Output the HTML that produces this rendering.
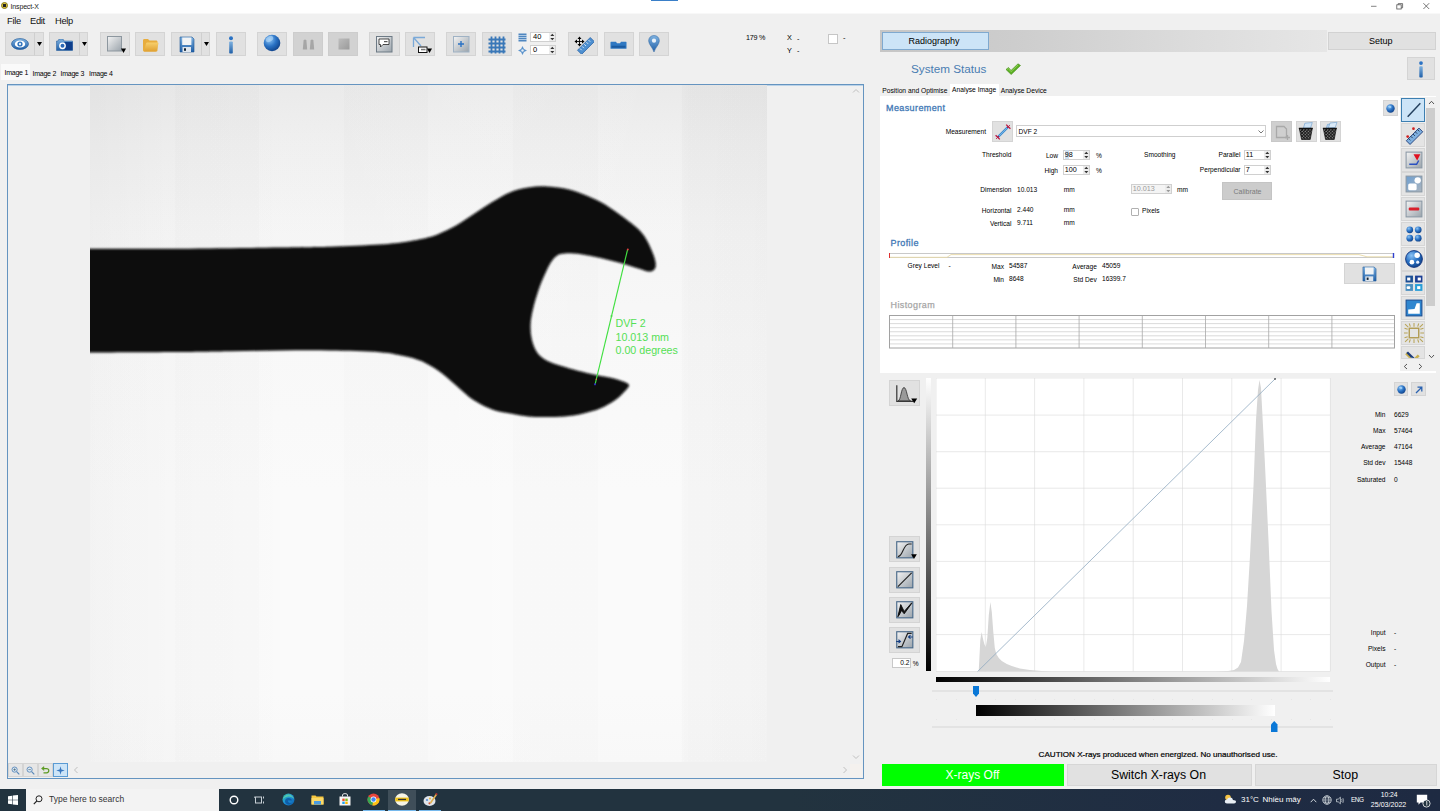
<!DOCTYPE html>
<html><head><meta charset="utf-8"><title>Inspect-X</title>
<style>
*{box-sizing:border-box;margin:0;padding:0}
html,body{width:1440px;height:811px;overflow:hidden;background:#f0f0f0;font-family:"Liberation Sans",sans-serif;font-size:7.5px;color:#000}
.a{position:absolute}
.t{position:absolute;white-space:nowrap;line-height:1}
.btn{position:absolute;background:#e1e1e1;border:1px solid #d4d4d4}
.r{text-align:right}
#right .t{margin-top:.8px}
.spin{position:absolute;background:#fff;border:1px solid #d0d0d0}
</style></head><body>
<!-- TITLEBAR -->
<div class="a" id="titlebar" style="left:0;top:0;width:1440px;height:12.5px;background:#fff"></div>
<div class="a" style="left:651px;top:0;width:27px;height:1px;background:#3a7fc8"></div>
<div class="a" style="left:1px;top:2px;width:7px;height:7px;border-radius:50%;background:#d9c23a;border:1px solid #8a7a20"></div>
<div class="a" style="left:3px;top:4px;width:3px;height:3px;background:#222"></div>
<div class="t" style="left:10.5px;top:3px;font-size:7px;letter-spacing:-.15px;color:#222">Inspect-X</div>
<svg class="a" style="left:1368px;top:0" width="66" height="13" viewBox="1368 0 66 13"><path d="M1371 6.3H1376.5" stroke="#666" stroke-width=".8"/><rect x="1396.8" y="4.8" width="4.4" height="4.2" fill="none" stroke="#555" stroke-width=".8"/><path d="M1398.2 4.8V3.6H1402.6V7.8H1401.2" fill="none" stroke="#555" stroke-width=".8"/><path d="M1423.4 3.2L1429.2 9M1429.2 3.2L1423.4 9" stroke="#555" stroke-width=".8"/></svg>
<div class="a" style="left:0;top:12.5px;width:1440px;height:1px;background:#f8f8f8"></div>
<!-- MENU -->
<div class="t" style="left:7px;top:16.8px;font-size:9.3px;letter-spacing:-.3px;color:#111">File</div>
<div class="t" style="left:30px;top:16.8px;font-size:9.3px;letter-spacing:-.3px;color:#111">Edit</div>
<div class="t" style="left:55px;top:16.8px;font-size:9.3px;letter-spacing:-.3px;color:#111">Help</div>
<!-- TOOLBAR -->
<div id="toolbar"><svg width="0" height="0" class="a"><defs>
<linearGradient id="gb" x1="0" y1="0" x2="0" y2="1"><stop offset="0" stop-color="#7fb2e0"/><stop offset="1" stop-color="#1f5fa8"/></linearGradient>
<linearGradient id="gg" x1="0" y1="0" x2="1" y2="1"><stop offset="0" stop-color="#f4f4f4"/><stop offset="1" stop-color="#9aa3ab"/></linearGradient>
<radialGradient id="gs" cx=".35" cy=".3" r=".8"><stop offset="0" stop-color="#8cc4f5"/><stop offset=".5" stop-color="#2a72c4"/><stop offset="1" stop-color="#0b3a80"/></radialGradient>
<linearGradient id="gf" x1="0" y1="0" x2="0" y2="1"><stop offset="0" stop-color="#f7cf6c"/><stop offset="1" stop-color="#e0a030"/></linearGradient>
<linearGradient id="gbg" x1="0" y1="0" x2="1" y2="1"><stop offset="0" stop-color="#6f9fd0"/><stop offset="1" stop-color="#aab4be"/></linearGradient></defs></svg>
<div class="btn" style="left:5px;top:32px;width:30px;height:24px;"><svg class="a" style="left:5px;top:5px" width="18" height="12" viewBox="0 0 18 12"><ellipse cx="9" cy="6" rx="8.5" ry="5.5" fill="url(#gb)" stroke="#1d5596" stroke-width=".6"/><ellipse cx="9" cy="6" rx="5.2" ry="3.6" fill="#fff"/><circle cx="9" cy="6" r="2.6" fill="#2f73bd"/><circle cx="9" cy="6" r="1.2" fill="#dbeaf8"/></svg></div>
<div class="btn" style="left:34px;top:32px;width:9.5px;height:24px;border-left-color:#cfcfcf"><svg class="a" style="left:2px;top:9px" width="6" height="5"><path d="M0 0H5L2.5 4Z" fill="#000"/></svg></div>
<div class="btn" style="left:49px;top:32px;width:30.5px;height:24px;"><svg class="a" style="left:6px;top:6px" width="17" height="12" viewBox="0 0 17 12"><path d="M3 0H7L8 2H16.5V11.5H0.5V2H2Z" fill="url(#gb)" stroke="#1d5596" stroke-width=".5"/><rect x="8.5" y="3" width="8" height="8" fill="#0f3f8c"/><circle cx="6.5" cy="6.8" r="3.4" fill="#fff"/><circle cx="6.5" cy="6.8" r="2" fill="#2a68b5"/></svg></div>
<div class="btn" style="left:78.5px;top:32px;width:9.5px;height:24px;border-left-color:#cfcfcf"><svg class="a" style="left:2px;top:9px" width="6" height="5"><path d="M0 0H5L2.5 4Z" fill="#000"/></svg></div>
<div class="btn" style="left:100px;top:32px;width:30px;height:24px;"><svg class="a" style="left:6px;top:3px" width="20" height="18" viewBox="0 0 20 18"><rect x="0.5" y="0.5" width="14" height="14.5" fill="url(#gg)" stroke="#8d979f" stroke-width="1"/><path d="M14 12.5H19L16.5 17Z" fill="#000"/></svg></div>
<div class="btn" style="left:135px;top:32px;width:30px;height:24px;"><svg class="a" style="left:6px;top:5px" width="17" height="14" viewBox="0 0 17 14"><path d="M1 2.5C1 1.5 1.5 1 2.5 1H6L7.5 2.5H14C15 2.5 15.5 3 15.5 4V12C15.5 13 15 13.5 14 13.5H2.5C1.5 13.5 1 13 1 12Z" fill="#e8ad3e"/><path d="M2 13.5L4 5.5C4.2 4.8 4.6 4.5 5.3 4.5H15.5C16.3 4.5 16.6 5 16.4 5.8L14.8 12.5C14.6 13.2 14.2 13.5 13.5 13.5Z" fill="url(#gf)"/></svg></div>
<div class="btn" style="left:171px;top:32px;width:30.5px;height:24px;"><svg class="a" style="left:7px;top:3px" width="16" height="17" viewBox="0 0 16 17"><path d="M1 1H13L15 3V16H1Z" fill="url(#gb)" stroke="#1d5596" stroke-width=".6"/><rect x="3.2" y="1.5" width="9.2" height="7.5" fill="#f1f3f5"/><rect x="3.5" y="11" width="8.5" height="5" fill="#dfe6ee"/><rect x="5" y="12.3" width="2" height="2.5" fill="#123"/></svg></div>
<div class="btn" style="left:200.5px;top:32px;width:9.5px;height:24px;border-left-color:#cfcfcf"><svg class="a" style="left:2px;top:9px" width="6" height="5"><path d="M0 0H5L2.5 4Z" fill="#000"/></svg></div>
<div class="btn" style="left:216px;top:32px;width:30px;height:24px;"><svg class="a" style="left:10.5px;top:3px" width="6" height="18" viewBox="0 0 6 18"><circle cx="3" cy="2.2" r="2" fill="#2a72c4"/><rect x="1.2" y="5.5" width="3.6" height="12" rx=".8" fill="url(#gb)"/></svg></div>
<div class="btn" style="left:257px;top:32px;width:30px;height:24px;"><svg class="a" style="left:4.5px;top:1.2px" width="18" height="18" viewBox="0 0 18 18"><circle cx="9" cy="9" r="8.3" fill="url(#gs)"/><ellipse cx="6.5" cy="5" rx="4" ry="2.6" fill="#bfe0fb" opacity=".55" transform="rotate(-30 6.5 5)"/></svg></div>
<div class="btn" style="left:293px;top:32px;width:30px;height:24px;background:#d2d2d2;border-color:#cdcdcd"><svg class="a" style="left:8px;top:5px" width="13" height="12" viewBox="0 0 13 12"><path d="M.8 11.5L1.6 2.5Q3 .3 4.4 2.5L5.2 11.5Z" fill="#a6a6a6"/><path d="M7.8 11.5L8.6 2.5Q10 .3 11.4 2.5L12.2 11.5Z" fill="#a6a6a6"/></svg></div>
<div class="btn" style="left:328px;top:32px;width:30px;height:24px;background:#d2d2d2;border-color:#cdcdcd"><svg class="a" style="left:8.5px;top:4.5px" width="12" height="12" viewBox="0 0 12 12"><defs><linearGradient id="gst" x1="0" y1="0" x2="1" y2="1"><stop offset="0" stop-color="#bdbdbd"/><stop offset="1" stop-color="#9a9a9a"/></linearGradient></defs><rect x=".5" y=".5" width="11" height="11" fill="url(#gst)"/></svg></div>
<div class="btn" style="left:369px;top:32px;width:31px;height:24px;"><svg class="a" style="left:5.5px;top:2.5px" width="17" height="17" viewBox="0 0 17 17"><rect x=".5" y=".5" width="15.5" height="15.5" fill="url(#gg)" stroke="#6d7a85" stroke-width="1"/><path d="M3 3H13V8.5H7L4.5 11V8.5H3Z" fill="#fff" stroke="#222" stroke-width=".8"/><rect x="8" y="5" width="3.5" height="1.2" fill="#555"/></svg></div>
<div class="btn" style="left:405px;top:32px;width:30px;height:24px;"><svg class="a" style="left:6px;top:3px" width="20" height="19" viewBox="0 0 20 19"><path d="M1.5 1.5H13M1.5 1.5V11M1.5 1.5L9 10" stroke="#7aa9d8" stroke-width="1.3" fill="none"/><rect x="6.5" y="11" width="8.5" height="5.5" fill="#fff" stroke="#111" stroke-width="1"/><rect x="9" y="12.8" width="4.5" height="1.5" fill="#777"/><path d="M15 12.5H20L17.5 17Z" fill="#000"/></svg></div>
<div class="btn" style="left:446px;top:32px;width:30px;height:24px;"><svg class="a" style="left:5.5px;top:2.5px" width="17" height="17" viewBox="0 0 17 17"><rect x=".5" y=".5" width="15.5" height="15.5" fill="url(#gg)" stroke="#9fb2c4" stroke-width="1"/><path d="M8 5V11M5 8H11" stroke="#2a72c4" stroke-width="1.4"/></svg></div>
<div class="btn" style="left:482px;top:32px;width:30px;height:24px;"><svg class="a" style="left:4.5px;top:2.5px" width="18" height="18" viewBox="0 0 18 18"><path d="M3.5 0.5V17.5M7.5 0.5V17.5M11.5 0.5V17.5M15.5 0.5V17.5M0.5 3.5H17.5M0.5 7.5H17.5M0.5 11.5H17.5M0.5 15.5H17.5" stroke="#3a78b8" stroke-width="1.8"/></svg></div>
<svg class="a" style="left:518px;top:33px" width="9" height="9" viewBox="0 0 9 9"><rect x=".5" y=".5" width="8" height="8" fill="#4f86bf"/><path d="M0 2.5H9M0 4.5H9M0 6.5H9" stroke="#d9e6f2" stroke-width=".7"/></svg>
<svg class="a" style="left:518px;top:46px" width="9" height="9" viewBox="0 0 9 9"><path d="M4.5 0L6 3L9 4.5L6 6L4.5 9L3 6L0 4.5L3 3Z" fill="#5b93cc"/><circle cx="4.5" cy="4.5" r="1.2" fill="#e6eef6"/></svg>
<div class="spin" style="left:530px;top:32px;width:26px;height:10px;background:#fff"><div class="t" style="left:2px;top:0.2px;font-size:7.5px;color:#000">40</div><svg class="a" style="right:0;top:0;background:#ececec" width="6.5" height="8" viewBox="-.8 0 6.5 8"><path d="M0.5 3L2.5 .8L4.5 3ZM0.5 5L2.5 7.2L4.5 5Z" fill="#333"/></svg></div>
<div class="spin" style="left:530px;top:45px;width:26px;height:10px;background:#fff"><div class="t" style="left:2px;top:0.2px;font-size:7.5px;color:#000">0</div><svg class="a" style="right:0;top:0;background:#ececec" width="6.5" height="8" viewBox="-.8 0 6.5 8"><path d="M0.5 3L2.5 .8L4.5 3ZM0.5 5L2.5 7.2L4.5 5Z" fill="#333"/></svg></div>
<div class="btn" style="left:568px;top:32px;width:30px;height:24px;"><svg class="a" style="left:5px;top:3px" width="20" height="18" viewBox="0 0 20 18"><g transform="rotate(-45 12 10)"><rect x="3" y="7" width="18" height="5.8" fill="#4d8fd0" stroke="#2560a5" stroke-width=".7"/><path d="M6 7.5V10M9 7.5V10M12 7.5V10M15 7.5V10M18 7.5V10" stroke="#fff" stroke-width=".7"/></g><path d="M5.5 .5L7.5 3H3.5ZM5.5 10.5L7.5 8H3.5ZM.5 5.5L3 3.5V7.5ZM10.5 5.5L8 3.5V7.5Z" fill="#000"/><path d="M5.5 2.5V8.5M2.5 5.5H8.5" stroke="#000" stroke-width=".9"/></svg></div>
<div class="btn" style="left:604px;top:32px;width:30px;height:24px;"><svg class="a" style="left:5px;top:7.5px" width="17" height="8.5" viewBox="0 0 17 8"><path d="M.5 1Q.5 .5 1 .5H6L7 2H10L11 .5H16Q16.5 .5 16.5 1V7Q16.5 7.5 16 7.5H1Q.5 7.5 .5 7Z" fill="#2f78c2"/><rect x="1.5" y="4.5" width="14" height="2" fill="#1b5aa0"/></svg></div>
<div class="btn" style="left:639px;top:32px;width:30px;height:24px;"><svg class="a" style="left:7.5px;top:2px" width="12" height="17.5" viewBox="0 0 12 18"><path d="M6 .5C9.2 .5 11.5 2.8 11.5 6C11.5 9.5 7.5 13 6 17.5C4.5 13 .5 9.5 .5 6C.5 2.8 2.8 .5 6 .5Z" fill="url(#gb)" stroke="#2a62a0" stroke-width=".5"/><circle cx="6" cy="5.8" r="2.2" fill="#e9f1f9"/></svg></div>
<div class="t" style="left:746px;top:34.3px;font-size:7.2px;letter-spacing:-.25px">179 %</div>
<div class="t" style="left:787px;top:34.3px;font-size:7.3px">X</div><div class="t" style="left:797px;top:34.5px;font-size:7.3px">-</div>
<div class="t" style="left:787px;top:47px;font-size:7.3px">Y</div><div class="t" style="left:797px;top:47.3px;font-size:7.3px">-</div>
<div class="a" style="left:828px;top:34px;width:9.5px;height:9.5px;background:#fff;border:1px solid #c6c6c6"></div>
<div class="t" style="left:843px;top:34px;font-size:7.5px">-</div></div>
<!-- IMAGE TABS -->
<div id="imgtabs">
<div class="a" style="left:1px;top:64px;width:29px;height:16px;background:#fafafa"></div>
<div class="t" style="left:4.5px;top:68.5px;font-size:7px;letter-spacing:-.25px">Image 1</div>
<div class="t" style="left:32.5px;top:69.5px;font-size:7px;letter-spacing:-.25px">Image 2</div>
<div class="t" style="left:60.5px;top:69.5px;font-size:7px;letter-spacing:-.25px">Image 3</div>
<div class="t" style="left:89px;top:69.5px;font-size:7px;letter-spacing:-.25px">Image 4</div>
</div>
<!-- VIEWER -->
<div id="viewer">
<div class="a" style="left:6.5px;top:83.5px;width:857.5px;height:695.5px;border:1.5px solid #6594c0;background:#f0f0f0"></div>
<div class="a" style="left:8px;top:85px;width:855px;height:1px;background:#b9d2e8"></div>
<div class="a" style="left:90px;top:85px;width:677px;height:677px;background:linear-gradient(180deg,#e9e9e9 0%,#efefef 9%,#f5f5f5 22%,#f8f8f8 38%,#fafafa 60%,#fafafa 90%,#f8f8f8 100%);overflow:hidden">
<div class="a" style="left:0;top:0;width:677px;height:677px;background:linear-gradient(90deg,rgba(0,0,0,.03) 0,rgba(0,0,0,.012) 12.5%,rgba(0,0,0,0) 30%,rgba(255,255,255,.1) 60%,rgba(0,0,0,0) 87%,rgba(0,0,0,.012) 88.5%,rgba(0,0,0,.018) 100%)"></div>
<div class="a" style="left:0;top:0;width:677px;height:677px;background:repeating-linear-gradient(90deg,rgba(255,255,255,.05) 0,rgba(255,255,255,.05) 84.6px,rgba(0,0,0,.006) 84.6px,rgba(0,0,0,.006) 169.2px)"></div>
</div>
<svg class="a" style="left:90px;top:85px" width="677" height="677" viewBox="90 85 677 677">
<defs><filter id="bl" x="-5%" y="-5%" width="110%" height="110%"><feGaussianBlur stdDeviation="1.1"/></filter>
<clipPath id="cp"><rect x="90" y="85" width="677" height="677"/></clipPath></defs>
<g clip-path="url(#cp)"><path filter="url(#bl)" fill="#0a0a0a" d="M88 248.75C103.3 248.8 148.0 249.0 180 248.75C212.0 248.5 255.0 247.8 280 247.5C305.0 247.2 313.3 247.2 330 246.75C346.7 246.2 367.5 245.3 380 244.5C392.5 243.7 398.3 242.9 405 242C411.7 241.1 415.8 240.1 420 239.3C424.2 238.5 427.0 237.8 430 237C433.0 236.2 433.6 236.2 438 234.3C442.4 232.4 450.1 229.0 456.1 225.6C462.1 222.2 468.2 217.7 474.2 213.8C480.2 209.9 486.2 205.7 492.2 202.1C498.2 198.5 504.3 194.6 510.3 192.2C516.3 189.8 522.3 188.6 528.3 187.6C534.3 186.6 540.4 186.2 546.4 186.4C552.4 186.6 558.5 187.2 564.5 188.5C570.5 189.8 576.5 191.7 582.5 194C588.5 196.3 594.6 198.8 600.6 202.1C606.6 205.4 612.4 209.4 618.6 213.8C624.8 218.2 632.9 224.2 637.6 228.6C642.3 233.0 644.1 235.7 646.8 240.2C649.5 244.7 652.3 251.6 653.8 255.8C655.3 260.0 655.8 262.9 655.8 265.3C655.8 267.7 654.8 269.3 653.5 270.3C652.2 271.3 650.8 271.8 648 271.4C645.2 271.0 641.6 269.5 636.7 268C631.8 266.5 624.6 264.3 618.6 262.6C612.6 260.9 606.6 259.4 600.6 258C594.6 256.6 587.0 255.2 582.5 254.5C578.0 253.8 576.5 253.7 573.5 253.5C570.5 253.3 567.2 253.3 564.5 253.6C561.8 253.9 559.4 254.1 557.2 255.4C555.0 256.7 553.3 258.9 551.5 261.5C549.7 264.1 548.2 267.1 546.5 270.7C544.8 274.3 542.5 279.4 541 283.3C539.5 287.2 538.4 290.6 537.2 294.2C536.0 297.8 535.0 301.0 534 305C533.0 309.0 531.8 314.2 531.2 318C530.6 321.8 530.5 324.7 530.5 328C530.5 331.3 530.8 334.5 531.5 338C532.2 341.5 533.5 345.8 535 348.8C536.5 351.9 538.4 354.3 540.5 356.3C542.6 358.3 544.4 359.5 547.5 361C550.6 362.5 554.7 363.8 559 365.2C563.3 366.6 568.1 368.0 573.5 369.5C578.9 371.0 585.5 372.6 591.5 374C597.5 375.4 604.8 376.5 609.6 377.6C614.4 378.7 617.5 379.5 620.4 380.4C623.3 381.3 625.4 382.2 626.8 383C628.2 383.8 628.9 384.4 629 385.2C629.1 386.0 628.8 386.6 627.7 388C626.6 389.4 624.3 391.9 622.2 393.9C620.1 395.9 618.6 397.8 615 400.2C611.4 402.6 606.0 406.0 600.6 408.3C595.2 410.6 588.5 412.4 582.5 413.8C576.5 415.2 570.5 416.0 564.5 416.5C558.5 417.0 552.4 417.0 546.4 417C540.4 417.0 534.3 417.1 528.3 416.5C522.3 415.9 516.3 414.8 510.3 413.6C504.3 412.4 498.2 411.7 492.2 409.5C486.2 407.3 478.7 403.2 474.2 400.5C469.7 397.8 468.1 396.0 465.1 393.5C462.1 391.0 459.1 388.2 456.1 385.5C453.1 382.8 450.0 380.0 447 377.5C444.0 375.0 441.0 372.6 438 370.5C435.0 368.4 432.0 366.7 429 365C426.0 363.3 424.0 361.9 420 360.5C416.0 359.1 411.7 357.7 405 356.3C398.3 354.9 392.5 353.2 380 352.2C367.5 351.2 346.7 350.8 330 350.5C313.3 350.2 296.7 350.4 280 350.5C263.3 350.6 246.7 351.0 230 351.25C213.3 351.5 203.7 351.8 180 352C156.3 352.2 103.3 352.4 88 352.5Z"/></g>
<line x1="627.6" y1="249.5" x2="595.2" y2="383.8" stroke="#40e040" stroke-width="1.15"/>
<circle cx="627.8" cy="249.5" r="1" fill="#e04040"/><circle cx="595" cy="384.3" r="1.1" fill="#3030c0"/><circle cx="596.3" cy="379.3" r=".8" fill="#d07050"/>
<circle cx="611.5" cy="316" r="1" fill="#45e045"/>
<text x="615.5" y="327" font-family="Liberation Sans, sans-serif" font-size="10.7" fill="#55e055">DVF 2</text>
<text x="615.5" y="340.6" font-family="Liberation Sans, sans-serif" font-size="10.7" fill="#55e055">10.013 mm</text>
<text x="615.5" y="354" font-family="Liberation Sans, sans-serif" font-size="10.7" fill="#55e055">0.00 degrees</text>
</svg>
<!-- scrollbars -->
<div class="a" style="left:8px;top:763px;width:15px;height:14px;background:#e6e6e6;border:1px solid #d4d4d4"><svg class="a" style="left:2px;top:2px" width="9" height="9" viewBox="0 0 9 9"><circle cx="3.6" cy="3.6" r="2.6" fill="#dce9f5" stroke="#5a88b8" stroke-width=".9"/><path d="M5.6 5.6L8.3 8.3" stroke="#5a88b8" stroke-width="1.2"/><path d="M2.3 3.6H4.9M3.6 2.3V4.9" stroke="#356" stroke-width=".6"/></svg></div>
<div class="a" style="left:23px;top:763px;width:15px;height:14px;background:#e6e6e6;border:1px solid #d4d4d4"><svg class="a" style="left:2px;top:2px" width="9" height="9" viewBox="0 0 9 9"><circle cx="3.6" cy="3.6" r="2.6" fill="#dce9f5" stroke="#5a88b8" stroke-width=".9"/><path d="M5.6 5.6L8.3 8.3" stroke="#5a88b8" stroke-width="1.2"/><path d="M2.3 3.6H4.9" stroke="#356" stroke-width=".6"/></svg></div>
<div class="a" style="left:38px;top:763px;width:15px;height:14px;background:#e6e6e6;border:1px solid #d4d4d4"><svg class="a" style="left:2px;top:2px" width="9" height="9" viewBox="0 0 9 9"><path d="M2.5 6.8H5.5Q7.8 6.8 7.8 4.6Q7.8 2.6 5.5 2.6H2" fill="none" stroke="#5a9a20" stroke-width="1.2"/><path d="M3.2 .8L1 2.6L3.2 4.4" fill="none" stroke="#5a9a20" stroke-width="1.1"/></svg></div>
<div class="a" style="left:53px;top:763px;width:15px;height:14px;background:#cce4f7;border:1px solid #5a9bd4"><svg class="a" style="left:2px;top:2px" width="9" height="9" viewBox="0 0 9 9"><path d="M4.5 .3L5.4 3.6L8.7 4.5L5.4 5.4L4.5 8.7L3.6 5.4L.3 4.5L3.6 3.6Z" fill="#3a78c0"/></svg></div>
<div class="a" style="left:850px;top:764px;width:12px;height:13px;background:#f4f1ee"></div>
<div class="a" style="left:848px;top:86px;width:15px;height:676px;background:#f0f0f0"></div>
<svg class="a" style="left:852px;top:88px" width="8" height="6"><path d="M1 4.5 L4 1.5 L7 4.5" fill="none" stroke="#c0c0c0" stroke-width="1"/></svg>
<svg class="a" style="left:852px;top:754px" width="8" height="6"><path d="M1 1.5 L4 4.5 L7 1.5" fill="none" stroke="#c0c0c0" stroke-width="1"/></svg>
<svg class="a" style="left:73px;top:766px" width="6" height="8"><path d="M4.5 1 L1.5 4 L4.5 7" fill="none" stroke="#c0c0c0" stroke-width="1"/></svg>
<svg class="a" style="left:842px;top:766px" width="6" height="8"><path d="M1.5 1 L4.5 4 L1.5 7" fill="none" stroke="#c0c0c0" stroke-width="1"/></svg>
</div>
<!-- RIGHT PANEL -->
<div id="right"><div class="a" style="left:880px;top:29.5px;width:447px;height:22.5px;background:linear-gradient(90deg,#c6c6c6 0%,#cdcdcd 30%,#dcdcdc 70%,#e6e6e6 100%)"></div>
<div class="a" style="left:882px;top:32px;width:107px;height:18px;background:#cce4f7;border:1px solid #7fa9cf"></div>
<div class="t" style="left:908.5px;top:36.0px;font-size:9px;color:#000;">Radiography</div>
<div class="a" style="left:1327px;top:30px;width:109px;height:22px;background:#f0f0f0"></div>
<div class="a" style="left:1328px;top:32px;width:108px;height:18px;background:#e1e1e1;border:1px solid #d2d2d2"></div>
<div class="t" style="left:1369px;top:36.0px;font-size:9px;color:#000;">Setup</div>
<div class="t" style="left:911px;top:62.4px;font-size:11.7px;color:#4a7db2;">System Status</div>
<svg class="a" style="left:1005px;top:63px" width="16" height="12" viewBox="0 0 16 12"><path d="M1 6.5L3.5 4.5L6 7.5L13 .8L15.5 2.5L6.2 11.5Z" fill="#5cb024" stroke="#3f8a12" stroke-width=".6"/><path d="M2.2 6.4L3.4 5.5L6 8.6L13 1.9" fill="none" stroke="#a8e070" stroke-width=".7"/></svg>
<div class="btn" style="left:1407px;top:57px;width:28px;height:23px"><svg class="a" style="left:10px;top:3px" width="6" height="17" viewBox="0 0 6 18"><circle cx="3" cy="2.2" r="2" fill="#2a72c4"/><rect x="1.2" y="5.5" width="3.6" height="12" rx=".8" fill="url(#gb)"/></svg></div>
<div class="a" style="left:950px;top:84px;width:49px;height:13px;background:#fff"></div>
<div class="t" style="left:882.3px;top:87.1px;font-size:6.7px;color:#000;">Position and Optimise</div>
<div class="t" style="left:952px;top:86.4px;font-size:6.7px;color:#000;">Analyse Image</div>
<div class="t" style="left:1000.7px;top:87.1px;font-size:6.7px;color:#000;">Analyse Device</div>
<div class="a" style="left:880px;top:96px;width:556px;height:277px;background:#fff"></div>
<div class="t" style="left:886px;top:103.2px;font-size:9px;color:#3f78b5;letter-spacing:.4px;-webkit-text-stroke:.3px #3f78b5">Measurement</div>
<div class="t" style="left:945.7px;top:128.1px;font-size:6.6px;color:#000;">Measurement</div>
<div class="btn" style="left:992px;top:121px;width:21px;height:21px"><svg class="a" style="left:1px;top:1px" width="18" height="18" viewBox="0 0 18 18"><path d="M3.5 14.5L14.5 3.5" stroke="#3a8cd0" stroke-width="2.4"/><path d="M4 14L14 4" stroke="#8fc4ee" stroke-width=".7"/><path d="M1.6 12.2L5.8 16.4M12.2 1.6L16.4 5.8" stroke="#c01840" stroke-width="1.3"/><path d="M2.2 15.8L5 13M13 5L15.8 2.2" stroke="#c01840" stroke-width="1"/></svg></div>
<div class="a" style="left:1016px;top:124.8px;width:250px;height:12px;background:#fff;border:1px solid #cfcfcf"></div>
<div class="t" style="left:1018.5px;top:127.9px;font-size:6.6px;color:#000;">DVF 2</div>
<svg class="a" style="left:1258px;top:129.5px" width="6" height="4"><path d="M.5 .5L3 3L5.5 .5" fill="none" stroke="#555" stroke-width=".8"/></svg>
<div class="btn" style="left:1271px;top:121px;width:21px;height:21px;background:#cfcfcf;border-color:#c8c8c8"><svg class="a" style="left:2px;top:2px" width="17" height="17" viewBox="0 0 17 17"><path d="M2.5 2.5H10L12.5 5V13.5H2.5Z" fill="none" stroke="#a9a9a9" stroke-width="1.3"/><path d="M13.5 11V16M11 13.5H16" stroke="#a9a9a9" stroke-width="1.3"/></svg></div>
<div class="btn" style="left:1295.5px;top:121px;width:21px;height:21px"><svg class="a" style="left:-1px;top:-1px" width="21" height="21" viewBox="0 0 21 21"><defs><pattern id="mesh" width="2.2" height="2.2" patternUnits="userSpaceOnUse" patternTransform="rotate(45)"><rect width="2.2" height="2.2" fill="#111"/><rect x=".3" y=".3" width="1" height="1" fill="#e8e8e8"/></pattern></defs><path d="M8.9 2.2L16.3 1.5L14.5 7L7.4 7.2Z" fill="#cfe3f5" stroke="#6a9ccc" stroke-width=".6"/><path d="M3.3 7.4H16.3L14.2 18.5H5.6Z" fill="url(#mesh)" stroke="#111" stroke-width=".7"/><rect x="2.9" y="6.8" width="13.8" height="1.3" fill="#111"/></svg></div>
<div class="btn" style="left:1320px;top:121px;width:21px;height:21px"><svg class="a" style="left:-1px;top:-1px" width="21" height="21" viewBox="0 0 21 21"><path d="M7.5 3.4L14.3 2.8L13 7L6.3 7.2Z" fill="#b9d4ee" stroke="#6a9ccc" stroke-width=".6"/><path d="M10 2L17 1.3L15.2 6.6L8.4 7Z" fill="#dbeaf7" stroke="#6a9ccc" stroke-width=".6"/><path d="M3.3 7.4H16.3L14.2 18.5H5.6Z" fill="url(#mesh)" stroke="#111" stroke-width=".7"/><rect x="2.9" y="6.8" width="13.8" height="1.3" fill="#111"/></svg></div>
<div class="t" style="left:982px;top:151.2px;font-size:6.6px;color:#000;">Threshold</div>
<div class="t" style="right:382px;top:152.0px;font-size:6.6px;color:#000;">Low</div>
<div class="spin" style="left:1063px;top:149.5px;width:27px;height:10px;background:#fff"><div class="t" style="left:.8px;top:-0.2px;font-size:7.2px;color:#000"><span style="background:#cfe0f0">9</span>8</div><svg class="a" style="right:0;top:0;background:#ececec" width="6.5" height="8" viewBox="-.8 0 6.5 8"><path d="M0.5 3L2.5 .8L4.5 3ZM0.5 5L2.5 7.2L4.5 5Z" fill="#333"/></svg></div>
<div class="t" style="left:1096px;top:152.0px;font-size:6.6px;color:#000;">%</div>
<div class="t" style="right:382px;top:167.4px;font-size:6.6px;color:#000;">High</div>
<div class="spin" style="left:1063px;top:164.5px;width:27px;height:10px;background:#fff"><div class="t" style="left:.8px;top:-0.2px;font-size:7.2px;color:#000">100</div><svg class="a" style="right:0;top:0;background:#ececec" width="6.5" height="8" viewBox="-.8 0 6.5 8"><path d="M0.5 3L2.5 .8L4.5 3ZM0.5 5L2.5 7.2L4.5 5Z" fill="#333"/></svg></div>
<div class="t" style="left:1096px;top:167.4px;font-size:6.6px;color:#000;">%</div>
<div class="t" style="left:1144px;top:151.2px;font-size:6.6px;color:#000;">Smoothing</div>
<div class="t" style="right:199.5px;top:151.2px;font-size:6.6px;color:#000;">Parallel</div>
<div class="spin" style="left:1244px;top:149.5px;width:27px;height:10px;background:#fff"><div class="t" style="left:.8px;top:-0.2px;font-size:7.2px;color:#000">11</div><svg class="a" style="right:0;top:0;background:#ececec" width="6.5" height="8" viewBox="-.8 0 6.5 8"><path d="M0.5 3L2.5 .8L4.5 3ZM0.5 5L2.5 7.2L4.5 5Z" fill="#333"/></svg></div>
<div class="t" style="right:199.5px;top:166.4px;font-size:6.6px;color:#000;">Perpendicular</div>
<div class="spin" style="left:1244px;top:164.5px;width:27px;height:10px;background:#fff"><div class="t" style="left:.8px;top:-0.2px;font-size:7.2px;color:#000">7</div><svg class="a" style="right:0;top:0;background:#ececec" width="6.5" height="8" viewBox="-.8 0 6.5 8"><path d="M0.5 3L2.5 .8L4.5 3ZM0.5 5L2.5 7.2L4.5 5Z" fill="#333"/></svg></div>
<div class="t" style="right:428.5px;top:186.4px;font-size:6.6px;color:#000;">Dimension</div>
<div class="t" style="left:1017px;top:186.4px;font-size:6.6px;color:#000;">10.013</div>
<div class="t" style="left:1063.7px;top:186.4px;font-size:6.6px;color:#000;">mm</div>
<div class="spin" style="left:1131px;top:183.5px;width:41px;height:10px;background:#f4f4f4"><div class="t" style="left:.8px;top:-0.2px;font-size:7.2px;color:#9a9a9a">10.013</div><svg class="a" style="right:0;top:0;background:#ececec" width="6.5" height="8" viewBox="-.8 0 6.5 8"><path d="M0.5 3L2.5 .8L4.5 3ZM0.5 5L2.5 7.2L4.5 5Z" fill="#999"/></svg></div>
<div class="t" style="left:1177px;top:186.4px;font-size:6.6px;color:#000;">mm</div>
<div class="a" style="left:1221.5px;top:182px;width:50px;height:18px;background:#cccccc;border:1px solid #c4c4c4"></div>
<div class="t" style="left:1233.5px;top:187.2px;font-size:7px;color:#7a7a7a;">Calibrate</div>
<div class="t" style="right:428.5px;top:206.8px;font-size:6.6px;color:#000;">Horizontal</div>
<div class="t" style="left:1017px;top:206.4px;font-size:6.6px;color:#000;">2.440</div>
<div class="t" style="left:1063.7px;top:206.4px;font-size:6.6px;color:#000;">mm</div>
<div class="t" style="right:428.5px;top:219.9px;font-size:6.6px;color:#000;">Vertical</div>
<div class="t" style="left:1017px;top:219.6px;font-size:6.6px;color:#000;">9.711</div>
<div class="t" style="left:1063.7px;top:219.6px;font-size:6.6px;color:#000;">mm</div>
<div class="a" style="left:1131px;top:207.5px;width:8px;height:8px;background:#fff;border:1px solid #b0b0b0;border-radius:1px"></div>
<div class="t" style="left:1142px;top:207.7px;font-size:6.6px;color:#000;">Pixels</div>
<div class="t" style="left:890.5px;top:237.9px;font-size:9px;color:#3f78b5;letter-spacing:.4px;-webkit-text-stroke:.3px #3f78b5">Profile</div>
<div class="a" style="left:889px;top:253px;width:505px;height:5px;background:#fff;border:1px solid #c9c9c9"></div>
<svg class="a" style="left:889px;top:252px" width="506" height="7"><path d="M1 5.3H58L62 2.6H470L478 4.8H504" fill="none" stroke="#e8d9a6" stroke-width=".9"/><path d="M.5 1V6" stroke="#e03030" stroke-width="1"/><path d="M504.5 1V6" stroke="#3040d0" stroke-width="1.4"/></svg>
<div class="t" style="left:907.6px;top:262.2px;font-size:6.6px;color:#000;">Grey Level</div>
<div class="t" style="left:948.5px;top:262.2px;font-size:6.6px;color:#000;">-</div>
<div class="t" style="right:436px;top:263.0px;font-size:6.6px;color:#000;">Max</div>
<div class="t" style="left:1009px;top:262.2px;font-size:6.6px;color:#000;">54587</div>
<div class="t" style="right:436px;top:276.4px;font-size:6.6px;color:#000;">Min</div>
<div class="t" style="left:1009px;top:275.6px;font-size:6.6px;color:#000;">8648</div>
<div class="t" style="right:343.20000000000005px;top:263.0px;font-size:6.6px;color:#000;">Average</div>
<div class="t" style="left:1102px;top:262.2px;font-size:6.6px;color:#000;">45059</div>
<div class="t" style="right:343.20000000000005px;top:276.4px;font-size:6.6px;color:#000;">Std Dev</div>
<div class="t" style="left:1102px;top:275.6px;font-size:6.6px;color:#000;">16399.7</div>
<div class="btn" style="left:1344px;top:263px;width:51px;height:21px"><svg class="a" style="left:17px;top:2px" width="15" height="16" viewBox="0 0 16 17"><path d="M1 1H13L15 3V16H1Z" fill="url(#gb)" stroke="#1d5596" stroke-width=".6"/><rect x="3.2" y="1.5" width="9.2" height="7.5" fill="#f1f3f5"/><rect x="3.5" y="11" width="8.5" height="5" fill="#dfe6ee"/><rect x="5" y="12.3" width="2" height="2.5" fill="#123"/></svg></div>
<div class="t" style="left:890.5px;top:300.2px;font-size:9px;color:#a6a6a6;letter-spacing:.4px;-webkit-text-stroke:.25px #a6a6a6">Histogram</div>
<svg class="a" style="left:889px;top:315px" width="506" height="34"><rect x=".5" y=".5" width="505" height="32.5" fill="#fff" stroke="#a2a2a2" stroke-width="1"/><path d="M1 4.56H505" stroke="#d0d0d0" stroke-width=".8"/><path d="M1 8.62H505" stroke="#d0d0d0" stroke-width=".8"/><path d="M1 12.68H505" stroke="#d0d0d0" stroke-width=".8"/><path d="M1 16.74H505" stroke="#d0d0d0" stroke-width=".8"/><path d="M1 20.80H505" stroke="#d0d0d0" stroke-width=".8"/><path d="M1 24.86H505" stroke="#d0d0d0" stroke-width=".8"/><path d="M1 28.92H505" stroke="#d0d0d0" stroke-width=".8"/><path d="M63.7 1V33" stroke="#a8a8a8" stroke-width=".8"/><path d="M126.9 1V33" stroke="#a8a8a8" stroke-width=".8"/><path d="M190.1 1V33" stroke="#a8a8a8" stroke-width=".8"/><path d="M253.3 1V33" stroke="#a8a8a8" stroke-width=".8"/><path d="M316.5 1V33" stroke="#a8a8a8" stroke-width=".8"/><path d="M379.7 1V33" stroke="#a8a8a8" stroke-width=".8"/><path d="M442.9 1V33" stroke="#a8a8a8" stroke-width=".8"/></svg>
<div class="btn" style="left:1382.5px;top:100px;width:15.5px;height:16px"><svg class="a" style="left:2.5px;top:3px" width="9" height="9"><circle cx="4.5" cy="4.5" r="4.2" fill="url(#gs)"/><path d="M2 2.5Q4 1 5.5 3Q4 5 2 2.5Z" fill="#9fd0f8"/></svg></div>
<div class="a" style="left:1400px;top:97px;width:26px;height:262px;background:#f0f0f0"></div>
<div class="a" style="left:1426px;top:97px;width:10px;height:273.5px;background:#f0f0f0"></div>
<div class="a" style="left:1400px;top:359px;width:26px;height:11.5px;background:#f0f0f0"></div>
<div class="a" style="left:1426px;top:108px;width:8.5px;height:198px;background:#cdcdcd"></div>
<svg class="a" style="left:1427.5px;top:100px" width="7" height="5"><path d="M1 4L3.5 1.3L6 4" fill="none" stroke="#444" stroke-width=".9"/></svg>
<svg class="a" style="left:1427.5px;top:353.5px" width="7" height="5"><path d="M1 1L3.5 3.7L6 1" fill="none" stroke="#444" stroke-width=".9"/></svg>
<svg class="a" style="left:1402.5px;top:362.5px" width="5" height="7"><path d="M4 1L1.3 3.5L4 6" fill="none" stroke="#444" stroke-width=".9"/></svg>
<svg class="a" style="left:1417.5px;top:362.5px" width="5" height="7"><path d="M1 1L3.7 3.5L1 6" fill="none" stroke="#444" stroke-width=".9"/></svg>
<div class="a" style="left:1401px;top:98px;width:24px;height:24px;background:#cce4f7;border:1px solid #3c7fb1;overflow:hidden"><svg class="a" style="left:1.5px;top:1px" width="20" height="20" viewBox="0 0 19 19"><path d="M3.5 16L15.5 3" stroke="#24405e" stroke-width="1.4"/></svg></div>
<div class="a" style="left:1401px;top:122.75px;width:24px;height:24px;background:#e4e4e4;border:1px solid #d6d6d6;overflow:hidden"><svg class="a" style="left:1.5px;top:1px" width="20" height="20" viewBox="0 0 19 19"><g transform="rotate(-45 10 10)"><rect x="1" y="8" width="17" height="5" fill="#7fb0e0" stroke="#1c3a78" stroke-width=".8"/><path d="M4 8V10.5M7 8V10.5M10 8V10.5M13 8V10.5M16 8V10.5" stroke="#123" stroke-width=".7"/></g><circle cx="3.5" cy="11" r="1.3" fill="#d02020"/><circle cx="9" cy="3.5" r="1.3" fill="#d02020"/></svg></div>
<div class="a" style="left:1401px;top:147.5px;width:24px;height:24px;background:#e4e4e4;border:1px solid #d6d6d6;overflow:hidden"><svg class="a" style="left:1.5px;top:1px" width="20" height="20" viewBox="0 0 19 19"><rect x="2" y="2" width="15" height="15" fill="url(#gg)" stroke="#8b98a5" stroke-width="1"/><path d="M9 4H15.5L12.5 10Z" fill="#e01020"/><path d="M5 13.5H12L14 10" stroke="#2a50c0" stroke-width="1.3" fill="none"/></svg></div>
<div class="a" style="left:1401px;top:172.25px;width:24px;height:24px;background:#e4e4e4;border:1px solid #d6d6d6;overflow:hidden"><svg class="a" style="left:1.5px;top:1px" width="20" height="20" viewBox="0 0 19 19"><rect x="2" y="2" width="15" height="15" fill="url(#gbg)" stroke="#8b98a5" stroke-width="1"/><rect x="4" y="9" width="8" height="6.5" rx="1.5" fill="#fff"/><circle cx="13" cy="6" r="3" fill="#fff"/></svg></div>
<div class="a" style="left:1401px;top:197px;width:24px;height:24px;background:#e4e4e4;border:1px solid #d6d6d6;overflow:hidden"><svg class="a" style="left:1.5px;top:1px" width="20" height="20" viewBox="0 0 19 19"><rect x="2" y="2" width="15" height="15" fill="url(#gg)" stroke="#8b98a5" stroke-width="1"/><rect x="4.5" y="8" width="10" height="3" rx="1" fill="#d8202c"/></svg></div>
<div class="a" style="left:1401px;top:221.75px;width:24px;height:24px;background:#e4e4e4;border:1px solid #d6d6d6;overflow:hidden"><svg class="a" style="left:1.5px;top:1px" width="20" height="20" viewBox="0 0 19 19"><circle cx="5.5" cy="5.5" r="3.2" fill="url(#gs)"/><circle cx="13.5" cy="5.5" r="3.2" fill="url(#gs)"/><circle cx="5.5" cy="13.5" r="3.2" fill="url(#gs)"/><circle cx="13.5" cy="13.5" r="3.2" fill="url(#gs)"/></svg></div>
<div class="a" style="left:1401px;top:246.5px;width:24px;height:24px;background:#e4e4e4;border:1px solid #d6d6d6;overflow:hidden"><svg class="a" style="left:1.5px;top:1px" width="20" height="20" viewBox="0 0 19 19"><circle cx="9.5" cy="9.5" r="8" fill="url(#gs)" stroke="#0c2c78" stroke-width=".8"/><circle cx="12.5" cy="6" r="2.6" fill="#fff"/><circle cx="7.5" cy="12.5" r="2.2" fill="#fff"/><circle cx="13" cy="12.5" r="1.5" fill="#e8f0ff"/></svg></div>
<div class="a" style="left:1401px;top:271.25px;width:24px;height:24px;background:#e4e4e4;border:1px solid #d6d6d6;overflow:hidden"><svg class="a" style="left:1.5px;top:1px" width="20" height="20" viewBox="0 0 19 19"><rect x="1.5" y="2.5" width="7" height="6.5" fill="#1c4f94"/><rect x="10.5" y="2.5" width="7" height="6.5" fill="#1c3f94"/><rect x="1.5" y="10.5" width="7" height="6.5" fill="#4a8fc0"/><rect x="10.5" y="10.5" width="7" height="6.5" fill="#2a9fd8"/><rect x="3" y="4.3" width="3" height="2.8" fill="#fff"/><rect x="13" y="4.3" width="3" height="2.8" fill="#fff"/><rect x="2.5" y="12.5" width="3.5" height="2.8" rx="1" fill="#fff"/><rect x="12.5" y="12.5" width="3" height="2.8" fill="#fff"/></svg></div>
<div class="a" style="left:1401px;top:296px;width:24px;height:24px;background:#e4e4e4;border:1px solid #d6d6d6;overflow:hidden"><svg class="a" style="left:1.5px;top:1px" width="20" height="20" viewBox="0 0 19 19"><rect x="2" y="2" width="15" height="15" fill="#2f86cf" stroke="#1c4f94" stroke-width="1"/><path d="M4 15V11L10 10.5L12 5H15V15Z" fill="#fff"/></svg></div>
<div class="a" style="left:1401px;top:320.75px;width:24px;height:24px;background:#e4e4e4;border:1px solid #d6d6d6;overflow:hidden"><svg class="a" style="left:1.5px;top:1px" width="20" height="20" viewBox="0 0 19 19"><rect x="5" y="5" width="9" height="9" fill="none" stroke="#b09a50" stroke-width="1.3"/><path d="M1 1L4 4M9.5 0V3.5M18 1L15 4M0 9.5H3.5M15.5 9.5H19M1 18L4 15M9.5 15.5V19M18 18L15 15M5 0.5L6 3.5M14 0.5L13 3.5M5 18.5L6 15.5M14 18.5L13 15.5M.5 5L3.5 6M.5 14L3.5 13M18.5 5L15.5 6M18.5 14L15.5 13" stroke="#b8a458" stroke-width="1"/></svg></div>
<div class="a" style="left:1401px;top:345.5px;width:24px;height:13.5px;background:#e4e4e4;border:1px solid #d6d6d6;overflow:hidden"><svg class="a" style="left:1.5px;top:1px" width="20" height="20" viewBox="0 0 19 19"><path d="M2 5L9 12L14 7" stroke="#c8b050" stroke-width="2.5" fill="none"/><path d="M3 4L12 13" stroke="#1c3a78" stroke-width="2.2"/><path d="M3 14L8 9" stroke="#5a8fc0" stroke-width="1.5"/></svg></div>
<div class="btn" style="left:888.5px;top:380px;width:31.5px;height:26px"><svg class="a" style="left:5.5px;top:2.5px" width="24" height="20.4" viewBox="0 0 20 17"><path d="M1.5 1V14.5H15" fill="none" stroke="#333" stroke-width="1"/><path d="M2.5 14C5 14 5 3 7.5 3C10 3 10 14 13 14Z" fill="#9a9a9a" stroke="#444" stroke-width=".8"/><path d="M13.5 12H18.5L16 16Z" fill="#000"/></svg></div>
<div class="a" style="left:926px;top:378px;width:5.2px;height:293px;background:linear-gradient(180deg,#fff,#000)"></div>
<svg class="a" style="left:935.8px;top:378px" width="395" height="294.5" viewBox="936 378 395 294.5"><rect x="936" y="378" width="394" height="293.5" fill="#fff"/><path d="M936.0 378V671.5" stroke="#dadada" stroke-width=".6"/><path d="M985.3 378V671.5" stroke="#dadada" stroke-width=".6"/><path d="M1034.6 378V671.5" stroke="#dadada" stroke-width=".6"/><path d="M1083.9 378V671.5" stroke="#dadada" stroke-width=".6"/><path d="M1133.2 378V671.5" stroke="#dadada" stroke-width=".6"/><path d="M1182.5 378V671.5" stroke="#dadada" stroke-width=".6"/><path d="M1231.8 378V671.5" stroke="#dadada" stroke-width=".6"/><path d="M1281.1 378V671.5" stroke="#dadada" stroke-width=".6"/><path d="M1330.4 378V671.5" stroke="#dadada" stroke-width=".6"/><path d="M936 378.0H1330" stroke="#dadada" stroke-width=".6"/><path d="M936 415.1H1330" stroke="#dadada" stroke-width=".6"/><path d="M936 451.7H1330" stroke="#dadada" stroke-width=".6"/><path d="M936 488.2H1330" stroke="#dadada" stroke-width=".6"/><path d="M936 524.8H1330" stroke="#dadada" stroke-width=".6"/><path d="M936 561.4H1330" stroke="#dadada" stroke-width=".6"/><path d="M936 598.0H1330" stroke="#dadada" stroke-width=".6"/><path d="M936 634.6H1330" stroke="#dadada" stroke-width=".6"/><path d="M936 671.5H1330" stroke="#dadada" stroke-width=".6"/><path d="M978.7 671.5 L979.3 660 L980.3 640 L981.6 632 L982.8 638 L984.3 644 L985.8 647 L987.3 638 L988.8 615 L990.4 602 L991.8 612 L993.3 632 L994.8 648 L996.3 654 L998.8 658 L1001.8 661 L1006.8 664 L1011.8 666 L1019.8 668.5 L1029.8 670 L1041.8 671 L1051.8 671.5Z" fill="#d6d6d6"/><path d="M1215 671.5 L1228 671 L1234 670 L1238 667.5 L1241 662 L1244 641 L1247 606 L1250 556 L1253.5 486 L1256 420 L1258 390 L1259.5 380 L1261 388 L1262.7 420 L1265 465 L1268.5 540 L1271.5 611 L1274 650 L1276 664 L1277.5 669 L1279 671.5Z" fill="#d6d6d6"/><path d="M977.6 671.5L1276 378" stroke="#8fa9c0" stroke-width=".8"/><circle cx="1275" cy="379" r=".9" fill="#555"/></svg>
<div class="t" style="right:54.5px;top:410.9px;font-size:6.6px;color:#000;">Min</div>
<div class="t" style="left:1394px;top:410.9px;font-size:6.6px;color:#000;">6629</div>
<div class="t" style="right:54.5px;top:427.3px;font-size:6.6px;color:#000;">Max</div>
<div class="t" style="left:1394px;top:427.3px;font-size:6.6px;color:#000;">57464</div>
<div class="t" style="right:54.5px;top:443.4px;font-size:6.6px;color:#000;">Average</div>
<div class="t" style="left:1394px;top:443.4px;font-size:6.6px;color:#000;">47164</div>
<div class="t" style="right:54.5px;top:459.4px;font-size:6.6px;color:#000;">Std dev</div>
<div class="t" style="left:1394px;top:459.4px;font-size:6.6px;color:#000;">15448</div>
<div class="t" style="right:54.5px;top:475.8px;font-size:6.6px;color:#000;">Saturated</div>
<div class="t" style="left:1394px;top:475.8px;font-size:6.6px;color:#000;">0</div>
<div class="t" style="right:54.5px;top:629.2px;font-size:6.6px;color:#000;">Input</div>
<div class="t" style="left:1394px;top:629.2px;font-size:6.6px;color:#000;">-</div>
<div class="t" style="right:54.5px;top:645.2px;font-size:6.6px;color:#000;">Pixels</div>
<div class="t" style="left:1394px;top:645.2px;font-size:6.6px;color:#000;">-</div>
<div class="t" style="right:54.5px;top:661.1px;font-size:6.6px;color:#000;">Output</div>
<div class="t" style="left:1394px;top:661.1px;font-size:6.6px;color:#000;">-</div>
<div class="btn" style="left:1394px;top:381.5px;width:14px;height:14.5px"><svg class="a" style="left:2px;top:2px" width="9" height="9"><circle cx="4.5" cy="4.5" r="4.2" fill="url(#gs)"/><path d="M2 2.5Q4 1 5.5 3Q4 5 2 2.5Z" fill="#9fd0f8"/></svg></div>
<div class="btn" style="left:1410.5px;top:381.5px;width:15px;height:14.5px"><svg class="a" style="left:3px;top:3px" width="8" height="8"><path d="M1 7L6.5 1.5M2.5 1.2H6.8V5.5" fill="none" stroke="#2a62b0" stroke-width="1.3"/></svg></div>
<div class="btn" style="left:888.5px;top:536.2px;width:31.5px;height:26.3px"><svg class="a" style="left:5px;top:2.5px" width="23" height="20.7" viewBox="0 0 20 18"><rect x="1.5" y="1.5" width="14" height="14" fill="url(#gg)" stroke="#4a6a8a" stroke-width="1"/><path d="M2.5 14.5C7 14.5 7 3.5 12 3.5H14.5" fill="none" stroke="#222" stroke-width="1"/><path d="M14 12.5H19L16.5 16.5Z" fill="#000"/></svg></div>
<div class="btn" style="left:888.5px;top:566.7px;width:31.5px;height:26.3px"><svg class="a" style="left:5px;top:2.5px" width="23" height="20.7" viewBox="0 0 20 18"><rect x="1.5" y="1.5" width="14" height="14" fill="url(#gg)" stroke="#4a6a8a" stroke-width="1"/><path d="M2.5 14.5L14.5 2.5" stroke="#222" stroke-width="1"/></svg></div>
<div class="btn" style="left:888.5px;top:596.7px;width:31.5px;height:26.3px"><svg class="a" style="left:5px;top:2.5px" width="23" height="20.7" viewBox="0 0 20 18"><rect x="1.5" y="1.5" width="14" height="14" fill="url(#gg)" stroke="#4a6a8a" stroke-width="1"/><path d="M2.5 14.5L5 4L8 10L14.5 2.5V3L8 12L5.5 9Z" fill="#111" stroke="#111" stroke-width=".8"/><path d="M2.5 14.5L5 4L6.5 8L4 13Z" fill="#111"/></svg></div>
<div class="btn" style="left:888.5px;top:626.7px;width:31.5px;height:26.3px"><svg class="a" style="left:5px;top:2.5px" width="23" height="20.7" viewBox="0 0 20 18"><rect x="1.5" y="1.5" width="14" height="14" fill="url(#gg)" stroke="#4a6a8a" stroke-width="1"/><path d="M2.5 14.5H6L11 3H14.5" fill="none" stroke="#222" stroke-width="1"/><path d="M1 10H4.5M3 8.5L4.8 10L3 11.5M15.5 6H12M13.5 4.5L11.7 6L13.5 7.5" stroke="#123c80" stroke-width=".9" fill="none"/></svg></div>
<div class="a" style="left:891.5px;top:657.8px;width:19px;height:10px;background:#fff;border:1px solid #c8c8c8"></div>
<div class="t" style="right:530.5px;top:659.6px;font-size:6.6px;color:#000;">0.2</div>
<div class="t" style="left:912.7px;top:659.9px;font-size:6.6px;color:#000;">%</div>
<div class="a" style="left:935.5px;top:676.5px;width:394.5px;height:5px;background:linear-gradient(90deg,#000,#fff)"></div>
<div class="a" style="left:931.5px;top:690px;width:401.5px;height:2px;background:#e3e3e3"></div>
<svg class="a" style="left:973px;top:685.5px" width="6" height="11"><path d="M0 0H6V7.5L3 11L0 7.5Z" fill="#0a78d7"/></svg>
<div class="a" style="left:976px;top:704.5px;width:298.5px;height:11px;background:linear-gradient(90deg,#000,#fff)"></div>
<div class="a" style="left:931.5px;top:725.5px;width:401.5px;height:2px;background:#e3e3e3"></div>
<svg class="a" style="left:1271px;top:720.5px" width="6.5" height="11.5"><path d="M0 11.5H6.5V3.5L3.25 0L0 3.5Z" fill="#0a78d7"/></svg>
<div class="a" style="left:936.0px;top:698.5px;width:1px;height:1px;background:#e6e6e6"></div><div class="a" style="left:936.0px;top:718.5px;width:1px;height:1px;background:#e6e6e6"></div><div class="a" style="left:955.7px;top:698.5px;width:1px;height:1px;background:#e6e6e6"></div><div class="a" style="left:955.7px;top:718.5px;width:1px;height:1px;background:#e6e6e6"></div><div class="a" style="left:975.4px;top:698.5px;width:1px;height:1px;background:#e6e6e6"></div><div class="a" style="left:975.4px;top:718.5px;width:1px;height:1px;background:#e6e6e6"></div><div class="a" style="left:995.1px;top:698.5px;width:1px;height:1px;background:#e6e6e6"></div><div class="a" style="left:995.1px;top:718.5px;width:1px;height:1px;background:#e6e6e6"></div><div class="a" style="left:1014.8px;top:698.5px;width:1px;height:1px;background:#e6e6e6"></div><div class="a" style="left:1014.8px;top:718.5px;width:1px;height:1px;background:#e6e6e6"></div><div class="a" style="left:1034.5px;top:698.5px;width:1px;height:1px;background:#e6e6e6"></div><div class="a" style="left:1034.5px;top:718.5px;width:1px;height:1px;background:#e6e6e6"></div><div class="a" style="left:1054.2px;top:698.5px;width:1px;height:1px;background:#e6e6e6"></div><div class="a" style="left:1054.2px;top:718.5px;width:1px;height:1px;background:#e6e6e6"></div><div class="a" style="left:1073.9px;top:698.5px;width:1px;height:1px;background:#e6e6e6"></div><div class="a" style="left:1073.9px;top:718.5px;width:1px;height:1px;background:#e6e6e6"></div><div class="a" style="left:1093.6px;top:698.5px;width:1px;height:1px;background:#e6e6e6"></div><div class="a" style="left:1093.6px;top:718.5px;width:1px;height:1px;background:#e6e6e6"></div><div class="a" style="left:1113.3px;top:698.5px;width:1px;height:1px;background:#e6e6e6"></div><div class="a" style="left:1113.3px;top:718.5px;width:1px;height:1px;background:#e6e6e6"></div><div class="a" style="left:1133.0px;top:698.5px;width:1px;height:1px;background:#e6e6e6"></div><div class="a" style="left:1133.0px;top:718.5px;width:1px;height:1px;background:#e6e6e6"></div><div class="a" style="left:1152.7px;top:698.5px;width:1px;height:1px;background:#e6e6e6"></div><div class="a" style="left:1152.7px;top:718.5px;width:1px;height:1px;background:#e6e6e6"></div><div class="a" style="left:1172.4px;top:698.5px;width:1px;height:1px;background:#e6e6e6"></div><div class="a" style="left:1172.4px;top:718.5px;width:1px;height:1px;background:#e6e6e6"></div><div class="a" style="left:1192.1px;top:698.5px;width:1px;height:1px;background:#e6e6e6"></div><div class="a" style="left:1192.1px;top:718.5px;width:1px;height:1px;background:#e6e6e6"></div><div class="a" style="left:1211.8px;top:698.5px;width:1px;height:1px;background:#e6e6e6"></div><div class="a" style="left:1211.8px;top:718.5px;width:1px;height:1px;background:#e6e6e6"></div><div class="a" style="left:1231.5px;top:698.5px;width:1px;height:1px;background:#e6e6e6"></div><div class="a" style="left:1231.5px;top:718.5px;width:1px;height:1px;background:#e6e6e6"></div><div class="a" style="left:1251.2px;top:698.5px;width:1px;height:1px;background:#e6e6e6"></div><div class="a" style="left:1251.2px;top:718.5px;width:1px;height:1px;background:#e6e6e6"></div><div class="a" style="left:1270.9px;top:698.5px;width:1px;height:1px;background:#e6e6e6"></div><div class="a" style="left:1270.9px;top:718.5px;width:1px;height:1px;background:#e6e6e6"></div><div class="a" style="left:1290.6px;top:698.5px;width:1px;height:1px;background:#e6e6e6"></div><div class="a" style="left:1290.6px;top:718.5px;width:1px;height:1px;background:#e6e6e6"></div><div class="a" style="left:1310.3px;top:698.5px;width:1px;height:1px;background:#e6e6e6"></div><div class="a" style="left:1310.3px;top:718.5px;width:1px;height:1px;background:#e6e6e6"></div><div class="a" style="left:1330.0px;top:698.5px;width:1px;height:1px;background:#e6e6e6"></div><div class="a" style="left:1330.0px;top:718.5px;width:1px;height:1px;background:#e6e6e6"></div>
<div class="t" style="left:958px;width:400px;text-align:center;top:750.6px;font-size:8.1px;color:#000;-webkit-text-stroke:.2px #000">CAUTION X-rays produced when energized. No unauthorised use.</div>
<div class="a" style="left:882px;top:764px;width:182px;height:22px;background:#00ff00"></div>
<div class="t" style="left:772.5px;width:400px;text-align:center;top:768.7px;font-size:12px;color:#fff;">X-rays Off</div>
<div class="a" style="left:1067px;top:764px;width:185px;height:22px;background:#e1e1e1;border:1px solid #d6d6d6"></div>
<div class="t" style="left:958.5px;width:400px;text-align:center;top:768.7px;font-size:12.3px;color:#000;">Switch X-rays On</div>
<div class="a" style="left:1255px;top:764px;width:182px;height:22px;background:#e1e1e1;border:1px solid #d6d6d6"></div>
<div class="t" style="left:1145.3px;width:400px;text-align:center;top:768.7px;font-size:12.4px;color:#000;">Stop</div>
</div>
<!-- TASKBAR -->
<div class="a" id="taskbar" style="left:0;top:788.6px;width:1440px;height:22.4px;background:linear-gradient(90deg,#22333f 0%,#22333f 55%,#1f2c43 85%,#1e2a42 100%)"><svg class="a" style="left:7.5px;top:6.5px" width="10" height="10" viewBox="0 0 10 10"><path d="M0 1.3L4.2 .7V4.7H0ZM4.8 .6L10 0V4.7H4.8ZM0 5.3H4.2V9.3L0 8.7ZM4.8 5.3H10V10L4.8 9.4Z" fill="#fff"/></svg>
<div class="a" style="left:26px;top:0px;width:193px;height:22px;background:#f3f3f3"></div>
<svg class="a" style="left:33px;top:6px" width="10" height="10" viewBox="0 0 10 10"><circle cx="6" cy="3.8" r="3" fill="none" stroke="#222" stroke-width="1"/><path d="M3.8 6L.8 9.2" stroke="#222" stroke-width="1.1"/></svg>
<div class="t" style="left:49px;top:6.5px;font-size:8.5px;color:#333">Type here to search</div>
<svg class="a" style="left:228.5px;top:6.5px" width="10" height="10"><circle cx="5" cy="5" r="3.8" fill="none" stroke="#fff" stroke-width="1.4"/></svg>
<svg class="a" style="left:254px;top:6.5px" width="11" height="10"><rect x="1.5" y="2" width="6" height="6" fill="none" stroke="#c8d0d6" stroke-width="1"/><path d="M9.5 1.5V3.5M9.5 6.5V8.5M.2 1.5V3" stroke="#c8d0d6" stroke-width="1"/></svg>
<svg class="a" style="left:282px;top:4.5px" width="13" height="13" viewBox="0 0 13 13"><defs><linearGradient id="ed" x1="0" y1="0" x2="1" y2="1"><stop offset="0" stop-color="#35c1a8"/><stop offset=".5" stop-color="#1b8ed8"/><stop offset="1" stop-color="#0c59a4"/></linearGradient></defs><circle cx="6.5" cy="6.5" r="6" fill="url(#ed)"/><path d="M3 8.5Q3 5 6.5 5Q9.5 5 10 7.5H6Q6 10.5 9.5 10.5Q6.5 12.5 4 10.5Q3 9.5 3 8.5Z" fill="#0c4f98" opacity=".75"/><path d="M1 6Q2 2 6.5 1.5Q11 1.5 12 6Q10 3.5 6.5 3.5Q3 3.5 1 6Z" fill="#6fe0a0" opacity=".6"/></svg>
<svg class="a" style="left:310.5px;top:5px" width="13" height="11" viewBox="0 0 13 11"><path d="M.5 1.5H4.5L5.5 2.5H12.5V10.5H.5Z" fill="#f8c840"/><rect x=".5" y="4" width="12" height="6.5" fill="#fbd968"/><rect x="3" y="7" width="7" height="3.5" fill="#4a9be0"/></svg>
<svg class="a" style="left:339px;top:4px" width="12" height="13" viewBox="0 0 12 13"><path d="M3.5 3.5V2Q3.5 .6 6 .6Q8.5 .6 8.5 2V3.5" fill="none" stroke="#f4f4f4" stroke-width=".9"/><rect x=".5" y="3.5" width="11" height="9" fill="#f6f6f6"/><rect x="3.3" y="5.6" width="2.4" height="2.4" fill="#f04f28"/><rect x="6.3" y="5.6" width="2.4" height="2.4" fill="#80bb20"/><rect x="3.3" y="8.6" width="2.4" height="2.4" fill="#20a4f0"/><rect x="6.3" y="8.6" width="2.4" height="2.4" fill="#fbb800"/></svg>
<svg class="a" style="left:367px;top:4.5px" width="13" height="13" viewBox="0 0 13 13"><circle cx="6.5" cy="6.5" r="6" fill="#e8453c"/><path d="M6.5 6.5L1.3 3.5A6 6 0 0 0 5.5 12.4Z" fill="#34a853"/><path d="M6.5 6.5L5.5 12.4A6 6 0 0 0 12.3 5Z" fill="#fbc116"/><circle cx="6.5" cy="6.5" r="2.9" fill="#fff"/><circle cx="6.5" cy="6.5" r="2.2" fill="#4285f4"/></svg>
<div class="a" style="left:388px;top:1px;width:28px;height:21px;background:#3f4e59"></div>
<svg class="a" style="left:395px;top:4.5px" width="14" height="13" viewBox="0 0 14 13"><ellipse cx="7" cy="6.5" rx="6.8" ry="6.2" fill="#f6f3e6"/><rect x=".3" y="4.6" width="13.4" height="3.8" fill="#f2c318"/><rect x="3" y="5.8" width="8" height="1.3" fill="#333"/></svg>
<svg class="a" style="left:423px;top:4px" width="15" height="14" viewBox="0 0 15 14"><ellipse cx="6.5" cy="8" rx="6" ry="5" fill="#dfe4ea"/><circle cx="4" cy="7" r="1.1" fill="#5a8fd0"/><circle cx="6.5" cy="10.3" r="1.1" fill="#d05a3a"/><circle cx="7" cy="5.5" r="1" fill="#e8b830"/><path d="M7.5 10L13.5 1.2" stroke="#e0b050" stroke-width="1.6"/><path d="M12.7 .5L14.3 1.7" stroke="#c03030" stroke-width="1.5"/></svg>
<div class="a" style="left:363px;top:21px;width:22px;height:1px;background:#76b9ed"></div>
<div class="a" style="left:388px;top:21px;width:28px;height:1px;background:#76b9ed"></div>
<div class="a" style="left:419px;top:21px;width:22px;height:1px;background:#76b9ed"></div>
<svg class="a" style="left:1224px;top:5px" width="13" height="10" viewBox="0 0 13 10"><circle cx="4" cy="3.5" r="2.8" fill="#f6c445"/><path d="M3 9.5Q.8 9.5 .8 7.5Q.8 5.6 3 5.6Q3.6 3.6 6 3.6Q8.6 3.6 9 6Q12 6 12 7.8Q12 9.5 10 9.5Z" fill="#e8eef4"/></svg>
<div class="t" style="left:1241px;top:7.5px;font-size:8px;color:#fff">31°C</div>
<div class="t" style="left:1262.5px;top:7.5px;font-size:8px;color:#fff">Nhiều mây</div>
<svg class="a" style="left:1310px;top:9px" width="7" height="5"><path d="M.7 4.2L3.5 1.2L6.3 4.2" fill="none" stroke="#e0e6ea" stroke-width=".9"/></svg>
<svg class="a" style="left:1322px;top:6.5px" width="10" height="10" viewBox="0 0 10 10"><circle cx="5" cy="5" r="4.2" fill="none" stroke="#e0e6ea" stroke-width=".8"/><ellipse cx="5" cy="5" rx="1.9" ry="4.2" fill="none" stroke="#e0e6ea" stroke-width=".7"/><path d="M.8 5H9.2M1.5 2.8H8.5M1.5 7.2H8.5" stroke="#e0e6ea" stroke-width=".6"/></svg>
<svg class="a" style="left:1336px;top:7px" width="9" height="9" viewBox="0 0 9 9"><path d="M.5 3.2H2.2L4.4 1.2V7.8L2.2 5.8H.5Z" fill="none" stroke="#e0e6ea" stroke-width=".7"/><path d="M5.6 3Q6.5 4.5 5.6 6M6.8 2Q8.3 4.5 6.8 7" fill="none" stroke="#e0e6ea" stroke-width=".6"/></svg>
<div class="t" style="left:1351px;top:8.3px;font-size:6.4px;letter-spacing:-.4px;color:#fff">ENG</div>
<div class="t" style="left:1380.8px;top:3px;font-size:6.8px;letter-spacing:-.1px;color:#fff">10:24</div>
<div class="t" style="left:1370.8px;top:13px;font-size:7.1px;color:#fff">25/03/2022</div>
<svg class="a" style="left:1416px;top:5px" width="15" height="14" viewBox="0 0 15 14"><path d="M.8 .8H11.2V8.5H4.5L2.5 10.8V8.5H.8Z" fill="#fff"/><circle cx="10.5" cy="9.5" r="3.6" fill="#22333f" stroke="#fff" stroke-width=".8"/><path d="M10 8L10.8 7.5V11.5" stroke="#fff" stroke-width=".8" fill="none"/></svg></div>
</body></html>
